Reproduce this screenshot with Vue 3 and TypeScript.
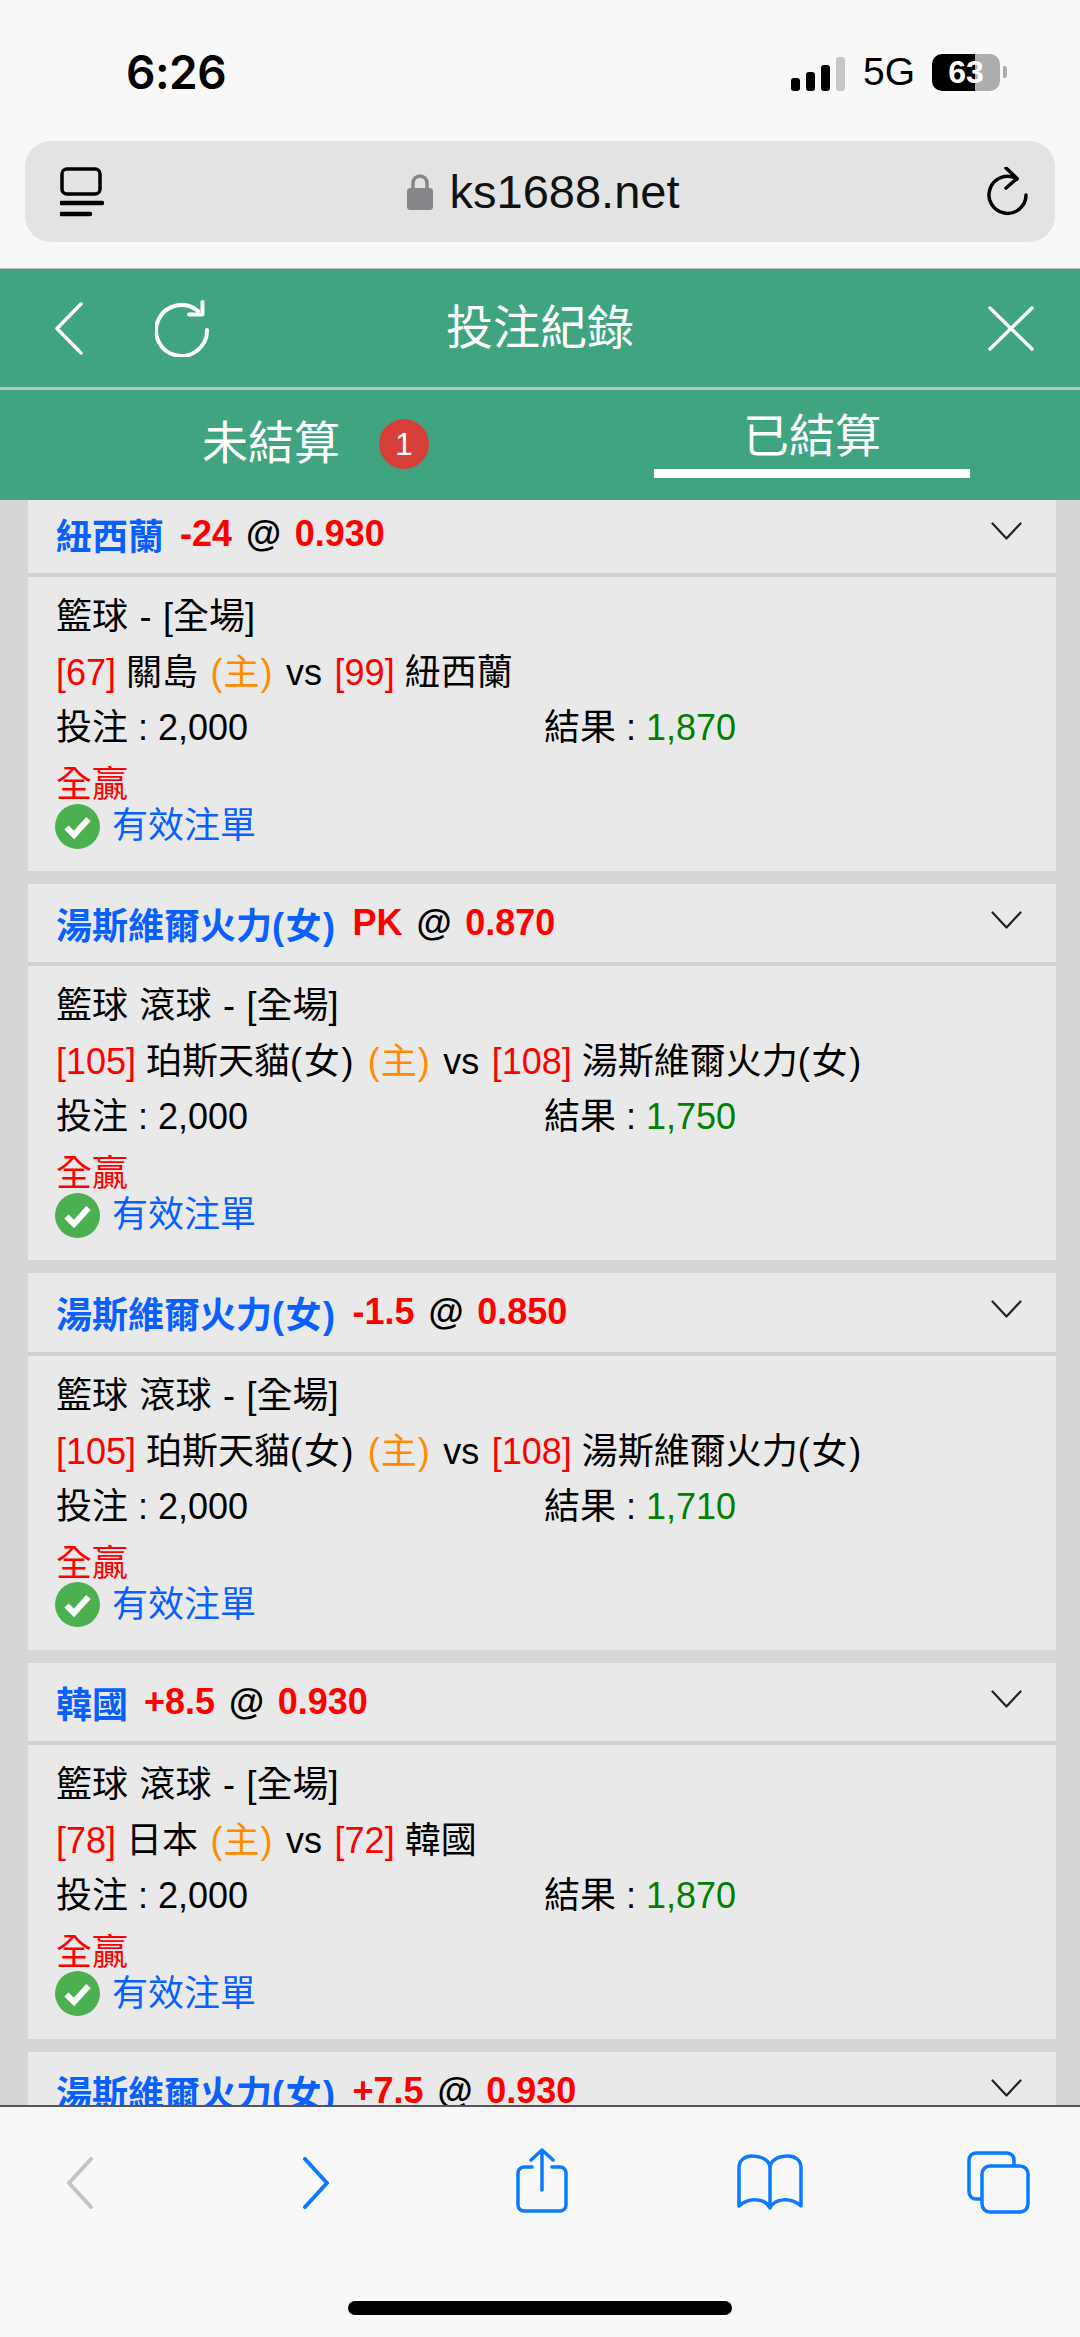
<template>
  <div class="phone">
    <div class="chrome">
      <div class="status">
        <span class="time">6:26</span>
        <div class="status-right">
          <div class="signal">
            <i class="bar b1"></i><i class="bar b2"></i><i class="bar b3"></i><i class="bar b4"></i>
          </div>
          <span class="net">5G</span>
          <div class="battery">63</div>
          <i class="battery-tip"></i>
        </div>
      </div>
      <div class="urlbar">
        <svg class="url-tabs" width="44" height="50" viewBox="0 0 44 50" fill="none" stroke="#000">
          <rect x="2" y="2" width="38" height="25" rx="5" stroke-width="3.5" />
          <path d="M1 36H42M1 47H30" stroke-width="4.5" stroke-linecap="round" />
        </svg>
        <div class="url-center">
          <svg width="26" height="36" viewBox="0 0 26 36">
            <path d="M6 16V9a7 7 0 0 1 14 0v7" fill="none" stroke="#85858a" stroke-width="3.5" />
            <rect x="0" y="14" width="26" height="22" rx="3.5" fill="#85858a" />
          </svg>
          <span class="url-text">ks1688.net</span>
        </div>
        <svg class="url-reload" width="42" height="50" viewBox="0 0 42 50" fill="none" stroke="#000" stroke-width="3.5" stroke-linecap="round" stroke-linejoin="round">
          <path d="M31 12A18.5 18.5 0 1 0 40 28" />
          <path d="M20 1l11 10.5L20 21" />
        </svg>
      </div>
    </div>

    <div class="topbar">
      <svg class="back" width="30" height="53" viewBox="0 0 30 53" fill="none" stroke="#fff" stroke-width="3.5" stroke-linecap="round" stroke-linejoin="round">
        <path d="M27 2L3 26.5L27 51" />
      </svg>
      <svg class="refresh" width="55" height="57" viewBox="0 0 55 57" fill="none" stroke="#fff" stroke-width="4" stroke-linecap="round" stroke-linejoin="round">
        <path d="M43 11A25.5 25.5 0 1 0 52 30" />
        <path d="M34 14.5H47.5V2" />
      </svg>
      <span class="title">投注紀錄</span>
      <svg class="close" width="46" height="45" viewBox="0 0 46 45" fill="none" stroke="#fff" stroke-width="3.5" stroke-linecap="round">
        <path d="M2 2L44 43M44 2L2 43" />
      </svg>
    </div>

    <div class="tabs">
      <div class="tab">
        <span class="tab-label">未結算</span>
        <span class="badge">1</span>
      </div>
      <div class="tab active">
        <span class="tab-label">已結算</span>
      </div>
    </div>

    <div class="list">
      <div class="scroller">
        <div v-for="(bet, i) in bets" :key="i" class="card">
          <div class="card-head">
            <span class="pick">{{ baseName(bet.pick) }}<span class="suffix">{{ suffix(bet.pick) }}</span></span>
            <span class="odds">{{ bet.line }}</span>
            <span class="at">@</span>
            <span class="odds">{{ bet.odds }}</span>
            <svg class="chevron" width="31" height="18" viewBox="0 0 31 18" fill="none" stroke="#222" stroke-width="2.2" stroke-linecap="round" stroke-linejoin="round">
              <path d="M1.5 1.5L15.5 16.5L29.5 1.5" />
            </svg>
          </div>
          <div class="card-body">
            <div class="line sport">{{ bet.sport }}</div>
            <div class="line"><span class="red">[{{ bet.homeScore }}]</span> {{ baseName(bet.home) }}<span class="suffix">{{ suffix(bet.home) }}</span> <span class="orange">(主)</span> <span class="vs">vs</span> <span class="red">[{{ bet.awayScore }}]</span> {{ baseName(bet.away) }}<span class="suffix">{{ suffix(bet.away) }}</span></div>
            <div class="line amounts">
              <span class="stake">投注 : 2,000</span>
              <span>結果 : <span class="green">{{ bet.result }}</span></span>
            </div>
            <div class="line outcome red">全贏</div>
            <div class="valid">
              <svg width="45" height="45" viewBox="0 0 45 45">
                <circle cx="22.5" cy="22.5" r="22.5" fill="#4caf50" />
                <path d="M11.5 23.5L19 31L33.5 15" fill="none" stroke="#fff" stroke-width="6" />
              </svg>
              <span class="valid-text">有效注單</span>
            </div>
          </div>
        </div>
      </div>
    </div>

    <div class="toolbar">
      <svg class="tb-back" width="28" height="52" viewBox="0 0 28 52" fill="none" stroke="#c4c4c4" stroke-width="4" stroke-linecap="round" stroke-linejoin="round">
        <path d="M25 2L3 26L25 50" />
      </svg>
      <svg class="tb-forward" width="28" height="52" viewBox="0 0 28 52" fill="none" stroke="#0a7aff" stroke-width="4" stroke-linecap="round" stroke-linejoin="round">
        <path d="M3 2L25 26L3 50" />
      </svg>
      <svg class="tb-share" width="52" height="66" viewBox="0 0 52 66" fill="none" stroke="#0a7aff" stroke-width="3.5" stroke-linecap="round" stroke-linejoin="round">
        <path d="M16 19H8a6 6 0 0 0-6 6v32a6 6 0 0 0 6 6h36a6 6 0 0 0 6-6V25a6 6 0 0 0-6-6h-8" />
        <path d="M26 42V2M15 12L26 2L37 12" />
      </svg>
      <svg class="tb-book" width="66" height="56" viewBox="0 0 66 56" fill="none" stroke="#0a7aff" stroke-width="3.5" stroke-linecap="round" stroke-linejoin="round">
        <path d="M33 14V54C28 44 12 43 2 52V14C2 6 8 2 15 2C24 2 33 6 33 14C33 6 42 2 51 2C58 2 64 6 64 14V52C54 43 38 44 33 54" />
      </svg>
      <svg class="tb-tabs" width="64" height="63" viewBox="0 0 64 63" fill="none" stroke="#0a7aff" stroke-width="3.5">
        <path d="M48 15V9a7 7 0 0 0-7-7H10a7 7 0 0 0-7 7v32a7 7 0 0 0 7 7h5" />
        <rect x="16" y="15" width="46" height="46" rx="8" />
      </svg>
      <i class="home"></i>
    </div>
  </div>
</template>

<script setup lang="ts">
interface Bet {
  pick: string
  line: string
  odds: string
  sport: string
  homeScore: number
  home: string
  awayScore: number
  away: string
  result: string
}

const bets: Bet[] = [
  { pick: '紐西蘭', line: '-24', odds: '0.930', sport: '籃球 - [全場]', homeScore: 67, home: '關島', awayScore: 99, away: '紐西蘭', result: '1,870' },
  { pick: '湯斯維爾火力(女)', line: 'PK', odds: '0.870', sport: '籃球 滾球 - [全場]', homeScore: 105, home: '珀斯天貓(女)', awayScore: 108, away: '湯斯維爾火力(女)', result: '1,750' },
  { pick: '湯斯維爾火力(女)', line: '-1.5', odds: '0.850', sport: '籃球 滾球 - [全場]', homeScore: 105, home: '珀斯天貓(女)', awayScore: 108, away: '湯斯維爾火力(女)', result: '1,710' },
  { pick: '韓國', line: '+8.5', odds: '0.930', sport: '籃球 滾球 - [全場]', homeScore: 78, home: '日本', awayScore: 72, away: '韓國', result: '1,870' },
  { pick: '湯斯維爾火力(女)', line: '+7.5', odds: '0.930', sport: '籃球 滾球 - [全場]', homeScore: 105, home: '珀斯天貓(女)', awayScore: 108, away: '湯斯維爾火力(女)', result: '1,870' },
]

// "(女)" is set a little wider than the team name in front of it
const baseName = (name: string) => name.replace('(女)', '')
const suffix = (name: string) => (name.includes('(女)') ? '(女)' : '')
</script>

<style>
html,
body {
  margin: 0;
  background: #f8f8f8;
}
</style>

<style scoped>
.phone {
  width: 1080px;
  height: 2337px;
  display: flex;
  flex-direction: column;
  overflow: hidden;
  background: #d6d6d6;
  font-family: "Liberation Sans", "Noto Sans CJK TC", sans-serif;
  color: #000;
}

.chrome {
  height: 269px;
  flex: none;
  box-sizing: border-box;
  background: #f8f8f8;
  border-bottom: 1px solid #bcbcbc;
}

.status {
  height: 141px;
  display: flex;
  align-items: flex-start;
  justify-content: space-between;
  box-sizing: border-box;
  padding: 44px 73px 0 126px;
}

.time {
  font-family: Inter, "Liberation Sans", sans-serif;
  font-weight: 600;
  font-size: 46px;
  line-height: 56px;
  letter-spacing: -0.5px;
}

.status-right {
  display: flex;
  align-items: center;
  height: 56px;
}

.signal {
  display: flex;
  align-items: flex-end;
  gap: 6px;
  height: 34px;
  margin-top: 3px;
}

.bar {
  display: block;
  width: 9px;
  background: #000;
  border-radius: 3px;
}

.b1 { height: 13px; }
.b2 { height: 19px; }
.b3 { height: 26px; }
.b4 { height: 34px; background: #c6c6c6; }

.net {
  margin-left: 18px;
  font-size: 39px;
  line-height: 56px;
}

.battery {
  width: 68px;
  height: 37px;
  margin-left: 17px;
  border-radius: 10px;
  background: linear-gradient(90deg, #000 43px, #adadad 43px);
  color: #fff;
  font-weight: 700;
  font-size: 32px;
  line-height: 37px;
  text-align: center;
}

.battery-tip {
  display: block;
  width: 4px;
  height: 12px;
  margin-left: 3px;
  border-radius: 0 3px 3px 0;
  background: #adadad;
}

.urlbar {
  height: 101px;
  margin: 0 25px;
  padding: 0 27px 0 35px;
  display: flex;
  align-items: center;
  justify-content: space-between;
  background: #e3e3e3;
  border-radius: 26px;
}

.url-center {
  display: flex;
  align-items: center;
  gap: 17px;
  margin-left: -4px;
}

.url-text {
  font-size: 47px;
  line-height: 50px;
  color: #111;
}

.topbar {
  height: 118px;
  flex: none;
  position: relative;
  display: flex;
  align-items: center;
  background: #41a481;
  border-bottom: 3px solid #b4c6bf;
  box-sizing: content-box;
}

.back {
  margin-left: 54px;
}

.refresh {
  margin-left: 71px;
}

.title {
  position: absolute;
  left: 0;
  right: 0;
  text-align: center;
  font-size: 47px;
  line-height: 60px;
  color: #fff;
}

.close {
  margin-left: auto;
  margin-right: 46px;
}

.tabs {
  height: 110px;
  flex: none;
  display: flex;
  padding-left: 157px;
  gap: 181px;
  background: #41a481;
  box-sizing: border-box;
}

.tab {
  width: 316px;
  height: 98px;
  box-sizing: border-box;
  display: flex;
  align-items: center;
  color: #fff;
  font-size: 46px;
}

.tab-label {
  margin-left: 45px;
}

.tab.active {
  height: 88px;
  padding-top: 4px;
  justify-content: center;
  border-bottom: 9px solid #fff;
}

.tab.active .tab-label {
  margin-left: 0;
}

.badge {
  width: 50px;
  height: 50px;
  margin: 10px 0 0 39px;
  border-radius: 50%;
  background: #d63f3a;
  text-align: center;
  font-size: 32px;
  line-height: 50px;
}

.list {
  flex: 1;
  min-height: 0;
  overflow: hidden;
}

.scroller {
  margin-top: -5.3px;
}

.card {
  margin: 0 24px 13px 28px;
}

.card-head {
  height: 78.3px;
  padding-left: 28px;
  display: flex;
  align-items: center;
  gap: 12px;
  background: #e9e9e9;
  font-weight: 700;
  font-size: 36px;
  border-bottom: 4px solid #d0d0d0;
  box-sizing: content-box;
}

.pick {
  margin-right: 4px;
  color: #0a60ff;
}

.pick .suffix {
  letter-spacing: 1.5px;
}

.odds {
  color: #f00;
}

.at {
  margin: 0 1.5px 0 2px;
}

.chevron {
  margin-left: auto;
  margin-right: 34px;
  margin-bottom: 6px;
}

.card-body {
  height: 294px;
  box-sizing: border-box;
  padding: 12px 28px 0;
  background: #e9e9e9;
  font-size: 36px;
}

.line {
  height: 55px;
  line-height: 55px;
  white-space: nowrap;
}

.sport {
  height: 56px;
  word-spacing: 1.5px;
}

.suffix {
  letter-spacing: 1.7px;
}

.amounts {
  height: 57px;
  display: flex;
}

.stake {
  width: 488px;
}

.outcome {
  height: 46.5px;
}

.valid {
  display: flex;
  align-items: center;
  gap: 12px;
  height: 45px;
  margin-left: -1px;
  color: #0a60ff;
}

.valid-text {
  margin-bottom: 8px;
}

.red {
  color: #f00;
}

.orange {
  margin: 0 2.5px;
  letter-spacing: 1px;
  color: #ff8c00;
}

.vs {
  margin-right: 2.5px;
}

.green {
  color: #008000;
}

.toolbar {
  height: 232px;
  flex: none;
  box-sizing: border-box;
  position: relative;
  display: flex;
  align-items: flex-start;
  background: #f8f8f8;
  border-top: 2px solid #555;
}

.tb-back { margin: 50px 0 0 66px; }
.tb-forward { margin: 50px 0 0 208px; }
.tb-share { margin: 41px 0 0 186px; }
.tb-book { margin: 47px 0 0 169px; }
.tb-tabs { margin: 44px 0 0 163px; }

.home {
  position: absolute;
  left: 348px;
  bottom: 22px;
  width: 384px;
  height: 14px;
  border-radius: 7px;
  background: #000;
}
</style>
